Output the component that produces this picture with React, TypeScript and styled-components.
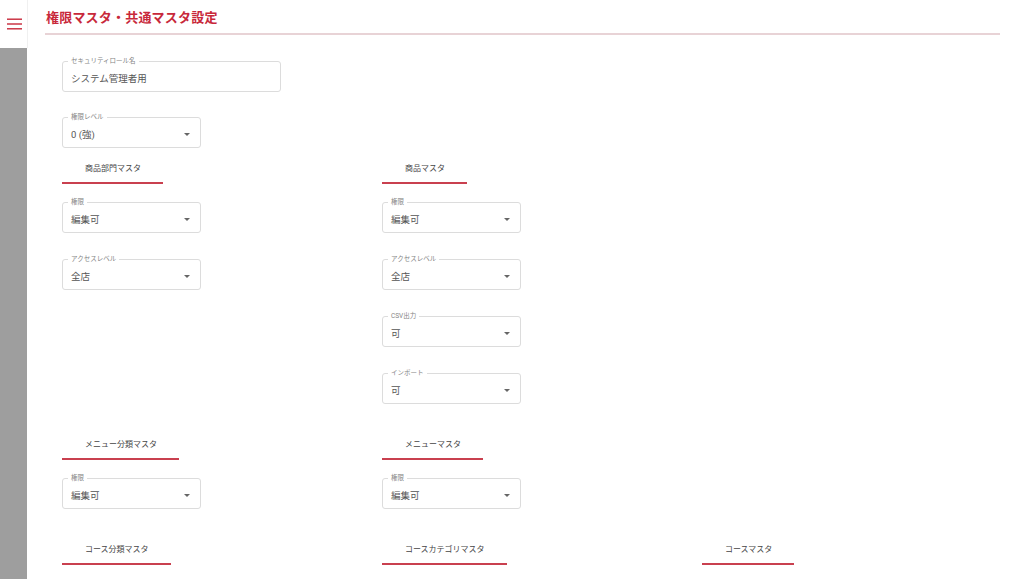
import React from "react"
import styled, { createGlobalStyle } from "styled-components"

const GlobalStyle = createGlobalStyle`
  html, body {
    margin: 0;
    padding: 0;
    background: #ffffff;
    font-family: Roboto, "Noto Sans CJK JP", "Noto Sans", sans-serif;
  }
  * {
    box-sizing: border-box;
  }
`

const RED = "#c8283a"

const Page = styled.div`
  display: flex;
  width: 1024px;
  height: 579px;
  overflow: hidden;
`

const Sidebar = styled.aside`
  width: 28px;
  display: flex;
  flex-direction: column;
  flex-shrink: 0;
`

const SidebarTop = styled.div`
  height: 48px;
  display: flex;
  justify-content: center;
  padding: 18px 0 0 2px;
  border-right: 1px solid #f0f0f0;
`

const SidebarFill = styled.div`
  flex: 1;
  background: #9e9e9e;
  margin-right: 1px;
`

const Main = styled.main`
  flex: 1;
  min-width: 0;
  padding: 0 24px 0 17px;
`

const Header = styled.header`
  height: 35px;
  border-bottom: 2px solid #e8d3d6;
  display: flex;
  align-items: center;
  padding-left: 1px;
`

const Title = styled.h1`
  margin: 0;
  font-size: 13px;
  font-weight: 700;
  color: ${RED};
  letter-spacing: 0.2px;
`

const Content = styled.div`
  padding: 26px 0 0 17px;
  display: flex;
  flex-direction: column;
`

const Field = styled.div<{ $w: number }>`
  position: relative;
  width: ${p => p.$w}px;
  height: 31px;
  border: 1px solid #dcdcdc;
  border-radius: 3px;
  display: flex;
  align-items: center;
  padding: 2px 10px 0 8px;
  flex-shrink: 0;
`

const Label = styled.span`
  position: absolute;
  top: -5px;
  left: 5px;
  padding: 0 3px;
  background: #ffffff;
  font-size: 6.5px;
  line-height: 8px;
  color: #858585;
  white-space: nowrap;
`

const Value = styled.span`
  flex: 1;
  font-size: 9.5px;
  color: #555555;
  white-space: nowrap;
`

const Arrow = styled.span`
  width: 0;
  height: 0;
  border-left: 3px solid transparent;
  border-right: 3px solid transparent;
  border-top: 3px solid #666666;
  margin-top: 1px;
`

const TopStack = styled.div`
  display: flex;
  flex-direction: column;
  gap: 25px;
`

const Rows = styled.div`
  display: flex;
  flex-direction: column;
  gap: 36px;
  margin-top: 16px;
`

const Row = styled.div`
  display: grid;
  grid-template-columns: 320px 320px 320px;
  align-items: start;
`

const Section = styled.section`
  display: flex;
  flex-direction: column;
  align-items: flex-start;
`

const SectionTitle = styled.div`
  font-size: 8px;
  line-height: 10px;
  color: #444444;
  padding: 0 22px 8px 23px;
  border-bottom: 2px solid #c9404f;
  margin-bottom: 18px;
  white-space: nowrap;
`

const Stack = styled.div`
  display: flex;
  flex-direction: column;
  gap: 26px;
`

const MenuIcon = () => (
  <svg width="15" height="12" viewBox="0 0 15 12">
    <rect x="0" y="0.5" width="15" height="1.4" fill={RED} />
    <rect x="0" y="5.3" width="15" height="1.4" fill={RED} />
    <rect x="0" y="10.1" width="15" height="1.4" fill={RED} />
  </svg>
)

type SelectProps = { label: string; value: string }

const Select = ({ label, value }: SelectProps) => (
  <Field $w={139}>
    <Label>{label}</Label>
    <Value>{value}</Value>
    <Arrow />
  </Field>
)

type Group = { title: string; fields: SelectProps[] } | null

const rows: Group[][] = [
  [
    {
      title: "商品部門マスタ",
      fields: [
        { label: "権限", value: "編集可" },
        { label: "アクセスレベル", value: "全店" },
      ],
    },
    {
      title: "商品マスタ",
      fields: [
        { label: "権限", value: "編集可" },
        { label: "アクセスレベル", value: "全店" },
        { label: "CSV出力", value: "可" },
        { label: "インポート", value: "可" },
      ],
    },
    null,
  ],
  [
    { title: "メニュー分類マスタ", fields: [{ label: "権限", value: "編集可" }] },
    { title: "メニューマスタ", fields: [{ label: "権限", value: "編集可" }] },
    null,
  ],
  [
    { title: "コース分類マスタ", fields: [] },
    { title: "コースカテゴリマスタ", fields: [] },
    { title: "コースマスタ", fields: [] },
  ],
]

export default function App() {
  return (
    <>
      <GlobalStyle />
      <Page>
        <Sidebar>
          <SidebarTop>
            <MenuIcon />
          </SidebarTop>
          <SidebarFill />
        </Sidebar>
        <Main>
          <Header>
            <Title>権限マスタ・共通マスタ設定</Title>
          </Header>
          <Content>
            <TopStack>
              <Field $w={219}>
                <Label>セキュリティロール名</Label>
                <Value>システム管理者用</Value>
              </Field>
              <Select label="権限レベル" value="0 (強)" />
            </TopStack>
            <Rows>
              {rows.map((row, i) => (
                <Row key={i}>
                  {row.map((group, j) =>
                    group ? (
                      <Section key={j}>
                        <SectionTitle>{group.title}</SectionTitle>
                        {group.fields.length > 0 && (
                          <Stack>
                            {group.fields.map(f => (
                              <Select key={f.label} label={f.label} value={f.value} />
                            ))}
                          </Stack>
                        )}
                      </Section>
                    ) : (
                      <div key={j} />
                    )
                  )}
                </Row>
              ))}
            </Rows>
          </Content>
        </Main>
      </Page>
    </>
  )
}
